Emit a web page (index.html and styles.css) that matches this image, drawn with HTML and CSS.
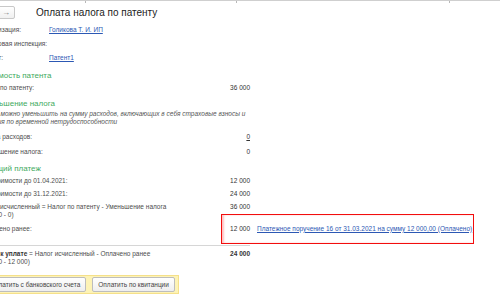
FILE: index.html
```html
<!DOCTYPE html>
<html lang="ru">
<head>
  <meta charset="UTF-8">
  <title>Оплата налога по патенту</title>
  <link rel="stylesheet" href="styles.css">
</head>
<body>
  <div class="tabs">
    <div class="tab" style="width: 85px"></div>
    <div class="tab" style="width: 150px"></div>
    <div class="tab" style="width: 212px"></div>
    <div class="tab last"></div>
  </div>
  <div class="form">
    <div class="header">
      <div class="nav">
        <button class="nav-btn">&larr;</button>
        <button class="nav-btn">&rarr;</button>
      </div>
      <h1>Оплата налога по патенту</h1>
    </div>

    <div class="field">
      <span class="label">Организация:</span>
      <a class="link" href="#">Голикова Т. И. ИП</a>
    </div>
    <div class="field">
      <span class="label">Налоговая инспекция:</span>
    </div>
    <div class="field">
      <span class="label">Патент:</span>
      <a class="link" href="#">Патент1</a>
    </div>

    <h2 class="group first">Стоимость патента</h2>
    <div class="row">
      <span class="label">Налог по патенту:</span>
      <span class="num">36 000</span>
    </div>

    <h2 class="group">Уменьшение налога</h2>
    <p class="note">Налог можно уменьшить на сумму расходов, включающих в себя страховые взносы и<br>пособия по временной нетрудоспособности</p>
    <div class="row tall">
      <span class="label">Сумма расходов:</span>
      <a class="num link" href="#">0</a>
    </div>
    <div class="row tall">
      <span class="label">Уменьшение налога:</span>
      <span class="num">0</span>
    </div>

    <h2 class="group">Текущий платеж</h2>
    <div class="row">
      <span class="label">1/3 стоимости до 01.04.2021:</span>
      <span class="num">12 000</span>
    </div>
    <div class="row">
      <span class="label">2/3 стоимости до 31.12.2021:</span>
      <span class="num">24 000</span>
    </div>
    <div class="row formula">
      <span class="label">Налог исчисленный = Налог по патенту - Уменьшение налога<br>(36 000 - 0)</span>
      <span class="num">36 000</span>
    </div>
    <div class="row paid">
      <span class="label">Оплачено ранее:</span>
      <span class="num">12 000</span>
      <a class="link doc" href="#">Платежное поручение 16 от 31.03.2021 на сумму 12 000,00 (Оплачено)</a>
    </div>
    <div class="row total">
      <span class="label"><b>Итого к уплате</b> = Налог исчисленный - Оплачено ранее<br>(36 000 - 12 000)</span>
      <span class="num"><b>24 000</b></span>
    </div>

    <div class="actions">
      <button class="btn">Оплатить с банковского счета</button>
      <button class="btn">Оплатить по квитанции</button>
    </div>
  </div>
</body>
</html>
```

FILE: styles.css
```css
body {
  margin: 0;
  background: #ffffff;
  font-family: 'Liberation Sans', Arial, sans-serif;
  font-size: 6.5px;
  color: #404040;
  width: 500px;
  height: 300px;
  overflow: hidden;
}
.tabs {
  display: flex;
  height: 2px;
  border-top: 1px solid #cfcfcf;
}
.tab {
  border-right: 1px solid #b8b8b8;
}
.tab.last {
  flex: 1;
  border-right: none;
}
.form {
  margin-left: -20px;
  width: 270px;
}
.header {
  display: flex;
  align-items: center;
  height: 19px;
}
.nav {
  display: flex;
}
.nav-btn {
  width: 18px;
  height: 13px;
  margin: 0 -1px 0 0;
  padding: 0;
  border: 1px solid #c8c8c8;
  border-radius: 2px;
  background: linear-gradient(#ffffff, #f0f0f0);
  color: #777;
  font-family: 'Liberation Sans', Arial, sans-serif;
  font-size: 8px;
  line-height: 11px;
}
h1 {
  margin: 0 0 0 22px;
  font-size: 10px;
  font-weight: normal;
  color: #222;
}
.field {
  display: flex;
  align-items: center;
  height: 14px;
}
.field .label {
  width: 69px;
  flex: none;
}
.label {
  color: #4d4d4d;
}
.link {
  color: #2c58b4;
  text-decoration: underline;
}
.group {
  margin: 6px 0 0;
  font-size: 8px;
  line-height: 10px;
  font-weight: normal;
  color: #3faa5e;
}
.group.first {
  margin-top: 7px;
}
.row {
  display: grid;
  grid-template-columns: 1fr 40px;
  align-items: center;
  height: 12px;
  margin-top: 1px;
}
.group + .row {
  margin-top: 0;
}
.row.tall {
  height: 14px;
  margin-top: 1px;
}
.note + .row.tall {
  margin-top: 3px;
}
.num {
  text-align: right;
  color: #333;
}
.note {
  margin: 1px 0 0;
  font-style: italic;
  line-height: 8px;
  color: #555;
  white-space: nowrap;
}
.formula {
  height: 16px;
  margin-top: 4px;
  align-items: start;
  line-height: 8px;
}
.paid {
  position: relative;
  grid-template-columns: 1fr 40px 0;
  margin-top: 3px;
}
.paid::after {
  content: '';
  position: absolute;
  left: 241px;
  top: -8px;
  width: 251px;
  height: 28px;
  border: 1px solid #f20d0d;
  box-shadow: inset 2px 0 2px rgba(255, 80, 80, 0.35);
}
.doc {
  margin-left: 7px;
  white-space: nowrap;
}
.total {
  height: 16px;
  margin-top: 11px;
  padding-top: 4px;
  border-top: 1px solid #d6d6d6;
  align-items: start;
  line-height: 8px;
}
.total b {
  color: #333;
}
.actions {
  display: inline-flex;
  gap: 6px;
  margin-top: 9px;
  padding: 1px 3px;
  background: #fdf3b6;
  border: 1px solid #f5e08a;
}
.btn {
  height: 15px;
  padding: 0 5px;
  border: 1px solid #bdbdbd;
  border-radius: 2px;
  background: linear-gradient(#ffffff, #eeeeee);
  color: #444;
  font-family: 'Liberation Sans', Arial, sans-serif;
  font-size: 6.5px;
}
```
